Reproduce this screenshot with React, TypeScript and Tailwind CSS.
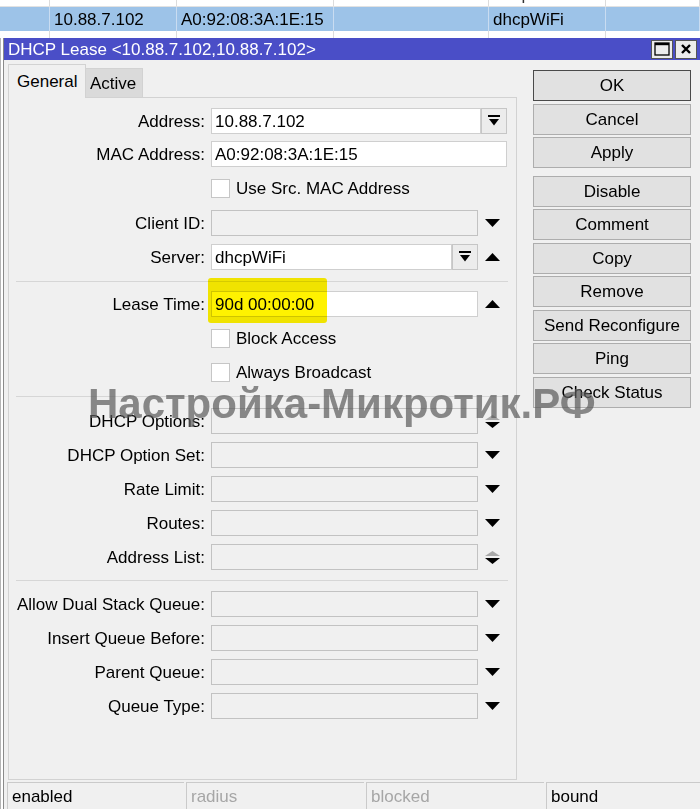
import React from "react"

const cols = [
  { x: "w-[50px]", text: "" },
  { x: "w-[127px]", text: "" },
  { x: "w-[157px]", text: "" },
  { x: "w-[155px]", text: "" },
  { x: "w-[117px]", text: "" },
]

function Down({ color = "#000", h = 8 }: { color?: string; h?: number }) {
  return (
    <svg width="15" height={h} viewBox={`0 0 15 ${h}`}>
      <path d={`M0 0H15L7.5 ${h}Z`} fill={color} />
    </svg>
  )
}

function Up({ color = "#000", h = 8 }: { color?: string; h?: number }) {
  return (
    <svg width="15" height={h} viewBox={`0 0 15 ${h}`}>
      <path d={`M0 ${h}H15L7.5 0Z`} fill={color} />
    </svg>
  )
}

function UpDown() {
  return (
    <div className="flex flex-col items-center gap-[2px]">
      <Up color="#a8a8a8" h={5} />
      <Down h={6} />
    </div>
  )
}

function DropBtn() {
  return (
    <div className="w-[26px] h-[26px] border border-[#c6c6c6] bg-[#ececec] flex items-center justify-center">
      <svg width="12" height="12" viewBox="0 0 12 12">
        <rect x="0" y="0" width="12" height="2" fill="#000" />
        <path d="M1 4H11L6 10.5Z" fill="#000" />
      </svg>
    </div>
  )
}

function Row({ label, children, className = "" }: { label: string; children: React.ReactNode; className?: string }) {
  return (
    <div className={`flex items-center h-[26px] ${className}`}>
      <div className="w-[196px] text-right whitespace-nowrap">{label}</div>
      <div className="ml-[6px] flex items-center h-full">{children}</div>
    </div>
  )
}

function Field({ value = "", white = false, w = "w-[267px]" }: { value?: string; white?: boolean; w?: string }) {
  return (
    <div
      className={`${w} h-[26px] border flex items-center pl-[3px] ${
        white ? "bg-white border-[#cfcfcf]" : "bg-[#f0f0f0] border-[#c2c2c2]"
      }`}
    >
      {value}
    </div>
  )
}

function Slot({ children }: { children?: React.ReactNode }) {
  return <div className="w-[29px] h-full flex items-center justify-center">{children}</div>
}

function Check({ label, className = "" }: { label: string; className?: string }) {
  return (
    <div className={`flex items-center h-[26px] ${className}`}>
      <div className="ml-[202px] w-[19px] h-[19px] border border-[#c6c6c6] bg-white" />
      <span className="ml-[6px]">{label}</span>
    </div>
  )
}

function Sep({ className = "" }: { className?: string }) {
  return <div className={`ml-[7px] mr-[8px] h-px bg-[#d6d6d6] ${className}`} />
}

function Btn({ label, def = false, className = "" }: { label: string; def?: boolean; className?: string }) {
  return (
    <div
      className={`h-[31px] w-[158px] flex items-center justify-center bg-[#e1e1e1] border ${
        def ? "border-[#4a4a4a]" : "border-[#adadad]"
      } ${className}`}
    >
      {label}
    </div>
  )
}

export default function App() {
  return (
    <div className="relative w-[700px] h-[809px] overflow-hidden bg-white text-[17px] text-black font-['Liberation_Sans',Arial,sans-serif] leading-none">
      {/* list behind the dialog */}
      <div className="flex h-[24px] -mt-[17px] border-b border-[#e2e2e2]">
        {["", "10.88.7.100", "70:E2:B4:5A:B5:0E ...", "android-a4b3c2d1e0", "dhcpWiFi", ""].map((t, i) => (
          <div
            key={i}
            className={`h-full flex items-center pl-[5px] border-r border-[#dcdcdc] text-[#333] overflow-hidden whitespace-nowrap ${
              ["w-[50px]", "w-[127px]", "w-[157px]", "w-[155px]", "w-[117px]", "flex-1"][i]
            }`}
          >
            {t}
          </div>
        ))}
      </div>
      <div className="flex h-[24px] bg-[#9dc3e8]">
        {["", "10.88.7.102", "A0:92:08:3A:1E:15", "", "dhcpWiFi", ""].map((t, i) => (
          <div
            key={i}
            className={`h-full flex items-center pl-[4px] border-r border-[#c9dcf1] whitespace-nowrap ${
              ["w-[50px]", "w-[127px]", "w-[157px]", "w-[155px]", "w-[117px]", "flex-1"][i]
            }`}
          >
            {t}
          </div>
        ))}
      </div>
      <div className="flex h-[7px]">
        {cols.map((c, i) => (
          <div key={i} className={`${c.x} h-full border-r border-[#dcdcdc]`} />
        ))}
      </div>

      <div className="flex">
        <div className="w-[3px] h-[780px] border-l border-[#b4b4b4]" />

        {/* dialog window */}
        <div className="w-[697px] border-l border-[#8a8a8a] bg-[#f0f0f0]">
          <div className="h-[22px] bg-[#4a4ec7] flex items-center pl-[4px] pr-[3px]">
            <span className="text-white flex-1 whitespace-nowrap">DHCP Lease &lt;10.88.7.102,10.88.7.102&gt;</span>
            <div className="w-[22px] h-[19px] bg-[#ececec] border border-[#555] flex items-center justify-center">
              <svg width="16" height="14" viewBox="0 0 16 14">
                <rect x="1" y="1" width="14" height="12" fill="none" stroke="#000" strokeWidth="1.3" />
                <rect x="1" y="1" width="14" height="2.2" fill="#000" />
              </svg>
            </div>
            <div className="ml-[2px] w-[22px] h-[19px] bg-[#ececec] border border-[#555] flex items-center justify-center">
              <svg width="12" height="12" viewBox="0 0 12 12">
                <path d="M2 2L10 10M10 2L2 10" stroke="#000" strokeWidth="2.4" />
              </svg>
            </div>
          </div>

          <div className="flex pl-[4px]">
            {/* tabs + panel */}
            <div className="w-[509px] pt-[4px]">
              <div className="flex items-end h-[33px]">
                <div className="relative z-10 h-[34px] -mb-px w-[78px] border border-b-0 border-[#d2d2d2] bg-[#f0f0f0] pl-[8px] flex items-center">
                  General
                </div>
                <div className="h-[29px] w-[57px] border border-b-0 border-l-0 border-[#d2d2d2] bg-[#dadada] pl-[4px] flex items-center">
                  Active
                </div>
              </div>
              <div className="relative h-[683px] border border-[#d2d2d2] pt-[10px]">
                <Row label="Address:">
                  <Field white value="10.88.7.102" w="w-[270px]" />
                  <DropBtn />
                </Row>
                <Row label="MAC Address:" className="mt-[7px]">
                  <Field white value="A0:92:08:3A:1E:15" w="w-[296px]" />
                </Row>
                <Check label="Use Src. MAC Address" className="mt-[8px]" />
                <Row label="Client ID:" className="mt-[9px]">
                  <Field />
                  <Slot>
                    <Down />
                  </Slot>
                </Row>
                <Row label="Server:" className="mt-[8px]">
                  <Field white value="dhcpWiFi" w="w-[241px]" />
                  <DropBtn />
                  <Slot>
                    <Up />
                  </Slot>
                </Row>
                <Sep className="mt-[11px]" />
                <Row label="Lease Time:" className="mt-[9px]">
                  <div className="relative">
                    <Field white value="90d 00:00:00" />
                    <div className="absolute -left-[3px] -top-[13px] w-[119px] h-[45px] rounded-[3px] bg-[#fff200] mix-blend-multiply" />
                  </div>
                  <Slot>
                    <Up />
                  </Slot>
                </Row>
                <Check label="Block Access" className="mt-[8px]" />
                <Check label="Always Broadcast" className="mt-[8px]" />
                <Sep className="mt-[11px]" />
                <Row label="DHCP Options:" className="mt-[11px]">
                  <Field />
                  <Slot>
                    <UpDown />
                  </Slot>
                </Row>
                {["DHCP Option Set:", "Rate Limit:", "Routes:"].map((l) => (
                  <Row key={l} label={l} className="mt-[8px]">
                    <Field />
                    <Slot>
                      <Down />
                    </Slot>
                  </Row>
                ))}
                <Row label="Address List:" className="mt-[8px]">
                  <Field />
                  <Slot>
                    <UpDown />
                  </Slot>
                </Row>
                <Sep className="mt-[10px]" />
                <Row label="Allow Dual Stack Queue:" className="mt-[10px]">
                  <Field />
                  <Slot>
                    <Down />
                  </Slot>
                </Row>
                {["Insert Queue Before:", "Parent Queue:", "Queue Type:"].map((l) => (
                  <Row key={l} label={l} className="mt-[8px]">
                    <Field />
                    <Slot>
                      <Down />
                    </Slot>
                  </Row>
                ))}
              </div>
            </div>

            {/* action buttons */}
            <div className="ml-[16px] pt-[10px] flex flex-col gap-[2.5px]">
              <Btn label="OK" def />
              <Btn label="Cancel" />
              <Btn label="Apply" />
              <Btn label="Disable" className="mt-[5px]" />
              <Btn label="Comment" />
              <Btn label="Copy" />
              <Btn label="Remove" />
              <Btn label="Send Reconfigure" />
              <Btn label="Ping" />
              <Btn label="Check Status" />
            </div>
          </div>

          {/* status bar */}
          <div className="flex mt-[2px] ml-[3px] gap-[2px]">
            {[
              { t: "enabled", c: "text-black", w: "w-[177px]" },
              { t: "radius", c: "text-[#a6a6a6]", w: "w-[178px]" },
              { t: "blocked", c: "text-[#a6a6a6]", w: "w-[178px]" },
              { t: "bound", c: "text-black", w: "flex-1" },
            ].map((s) => (
              <div key={s.t} className={`${s.w} h-[30px] border-t border-l border-[#cacaca] pl-[4px] pt-[5px] ${s.c}`}>
                {s.t}
              </div>
            ))}
          </div>
        </div>
      </div>

      {/* watermark */}
      <div className="absolute left-[88px] top-[383px] text-[42px] font-bold leading-none whitespace-nowrap text-[#5a5a5a]/70 pointer-events-none">
        Настройка-Микротик.РФ
      </div>
    </div>
  )
}
